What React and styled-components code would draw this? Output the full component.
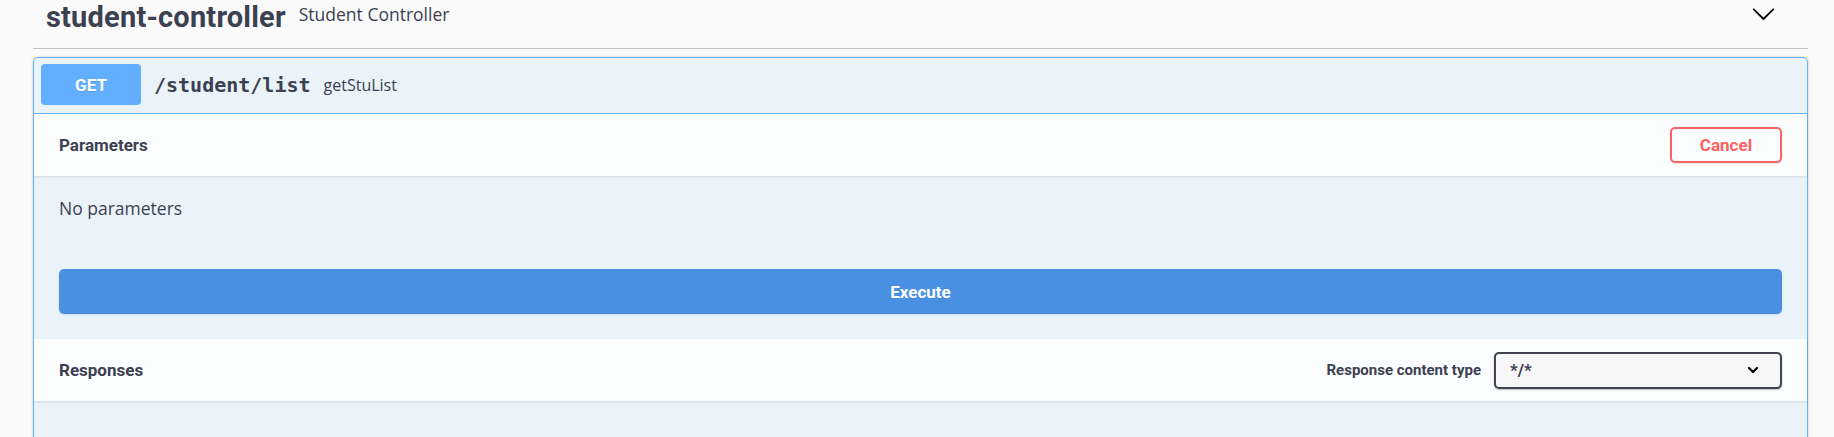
import styled, { createGlobalStyle } from "styled-components"

const GlobalStyle = createGlobalStyle`
    body {
        margin: 0;
        background: #fafafa;
        color: #3b4151;
    }
`

const HEAD = "Roboto, 'Liberation Sans', sans-serif"
const BODY = "'Open Sans', 'Noto Sans', sans-serif"
const MONO = "'DejaVu Sans Mono', 'Liberation Mono', monospace"

function Arrow({ size }) {
    return (
        <svg width={size} height={size} viewBox="0 0 20 20">
            <path
                fill="currentColor"
                d="M17.418 6.109c.272-.268.709-.268.979 0s.271.701 0 .969l-7.908 7.83c-.27.268-.707.268-.979 0l-7.908-7.83c-.27-.268-.27-.701 0-.969.271-.268.709-.268.979 0L10 13.25l7.418-7.141z"
            />
        </svg>
    )
}

function SmallChevron() {
    return (
        <svg width="14" height="14" viewBox="0 0 14 14">
            <path d="M3 5l4 4 4-4" fill="none" stroke="currentColor" strokeWidth="2.2" strokeLinecap="round" strokeLinejoin="round" />
        </svg>
    )
}

function App() {
    return (
        <Wrapper>
            <GlobalStyle />
            <TagHeader>
                <TagName>student-controller</TagName>
                <TagDesc>Student Controller</TagDesc>
                <Toggle>
                    <Arrow size={25} />
                </Toggle>
            </TagHeader>

            <Opblock>
                <OpHeader>
                    <Method>GET</Method>
                    <Path>/student/list</Path>
                    <Summary>getStuList</Summary>
                </OpHeader>

                <SectionHeader>
                    <SectionTitle>Parameters</SectionTitle>
                    <CancelButton>Cancel</CancelButton>
                </SectionHeader>
                <Description>No parameters</Description>
                <ExecuteWrapper>
                    <ExecuteButton>Execute</ExecuteButton>
                </ExecuteWrapper>

                <SectionHeader>
                    <SectionTitle>Responses</SectionTitle>
                    <ContentType>
                        <Label>Response content type</Label>
                        <Select>
                            <span>*/*</span>
                            <SelectArrow>
                                <SmallChevron />
                            </SelectArrow>
                        </Select>
                    </ContentType>
                </SectionHeader>
                <ResponsesBody />
            </Opblock>
        </Wrapper>
    )
}

const Wrapper = styled.div`
    padding: 0 26px 0 33px;
    overflow: hidden;
    height: 437px;
`

const TagHeader = styled.div`
    display: flex;
    align-items: center;
    height: 48px;
    padding: 0 32px 0 13px;
    border-bottom: 1px solid rgba(59, 65, 81, 0.3);
`

const TagName = styled.h3`
    margin: 0 0 14px;
    font-family: ${HEAD};
    font-weight: 700;
    font-size: 29px;
    line-height: 36px;
    letter-spacing: 0.2px;
    color: #3b4151;
`

const TagDesc = styled.small`
    flex: 1;
    margin: 0 0 20px 13px;
    font-family: ${BODY};
    font-size: 17.5px;
    line-height: 24px;
    color: #3b4151;
`

const Toggle = styled.div`
    display: flex;
    align-self: flex-start;
    margin-top: 1px;
    color: #000;
`

const Opblock = styled.div`
    margin-top: 8px;
    border: 1px solid #61affe;
    border-radius: 5px;
    background: rgba(97, 175, 254, 0.1);
    box-shadow: 0 0 3px rgba(0, 0, 0, 0.19);
`

const OpHeader = styled.div`
    display: flex;
    align-items: center;
    padding: 6px 7px 8px;
    border-bottom: 1px solid #61affe;
`

const Method = styled.span`
    width: 100px;
    height: 41px;
    display: flex;
    align-items: center;
    justify-content: center;
    background: #61affe;
    border-radius: 4px;
    color: #fff;
    font-family: ${HEAD};
    font-weight: 700;
    font-size: 17px;
    text-shadow: 0 1px 0 rgba(0, 0, 0, 0.1);
`

const Path = styled.span`
    padding: 0 13px;
    font-family: ${MONO};
    font-weight: 700;
    font-size: 20px;
    color: #3b4151;
`

const Summary = styled.span`
    font-family: ${BODY};
    font-size: 16px;
    color: #3b4151;
`

const SectionHeader = styled.div`
    display: flex;
    align-items: center;
    justify-content: space-between;
    height: 62px;
    padding: 0 25px;
    background: rgba(255, 255, 255, 0.8);
    box-shadow: 0 1px 2px rgba(0, 0, 0, 0.1);
`

const SectionTitle = styled.h4`
    margin: 0;
    font-family: ${HEAD};
    font-weight: 700;
    font-size: 17px;
    color: #3b4151;
`

const CancelButton = styled.button`
    width: 112px;
    height: 36px;
    background: transparent;
    border: 2px solid #ff6060;
    border-radius: 5px;
    color: #ff6060;
    font-family: ${HEAD};
    font-weight: 700;
    font-size: 17px;
    box-shadow: 0 1px 2px rgba(0, 0, 0, 0.1);
`

const Description = styled.p`
    margin: 0;
    padding: 20px 25px 24px;
    font-family: ${BODY};
    font-size: 17.5px;
    line-height: 24px;
    color: #3b4151;
`

const ExecuteWrapper = styled.div`
    padding: 25px;
`

const ExecuteButton = styled.button`
    display: block;
    width: 100%;
    height: 45px;
    background: #4990e2;
    border: none;
    border-radius: 5px;
    color: #fff;
    font-family: ${HEAD};
    font-weight: 700;
    font-size: 17px;
    box-shadow: 0 1px 2px rgba(0, 0, 0, 0.1);
`

const ContentType = styled.div`
    display: flex;
    align-items: center;
`

const Label = styled.span`
    margin-right: 13px;
    font-family: ${HEAD};
    font-weight: 700;
    font-size: 15px;
    color: #3b4151;
`

const Select = styled.div`
    box-sizing: border-box;
    width: 288px;
    height: 37px;
    display: flex;
    align-items: center;
    justify-content: space-between;
    padding: 0 20px 0 14px;
    background: #f7f7f7;
    border: 2px solid #41444e;
    border-radius: 5px;
    box-shadow: 0 1px 2px rgba(0, 0, 0, 0.25);
    font-family: ${HEAD};
    font-weight: 700;
    font-size: 17px;
    color: #3b4151;
`

const SelectArrow = styled.span`
    display: flex;
    color: #000;
`

const ResponsesBody = styled.div`
    height: 80px;
`

export default App
